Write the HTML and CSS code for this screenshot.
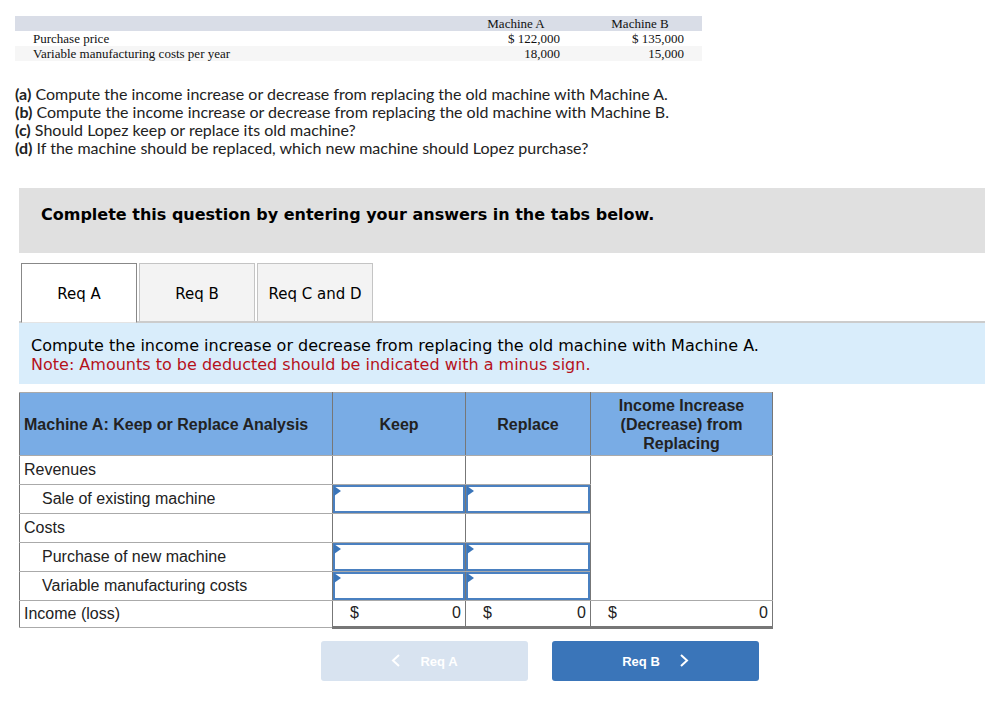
FILE: index.html
```html
<!DOCTYPE html>
<html lang="en">
<head>
<meta charset="utf-8">
<title>Keep or Replace Analysis</title>
<link rel="stylesheet" href="styles.css">
</head>
<body>
<main>
  <section class="problem">
    <table class="costs">
      <colgroup><col><col class="costs-col"><col class="costs-col"></colgroup>
      <thead>
        <tr><td></td><th scope="col">Machine A</th><th scope="col">Machine B</th></tr>
      </thead>
      <tbody>
        <tr><th scope="row">Purchase price</th><td>$ 122,000</td><td>$ 135,000</td></tr>
        <tr><th scope="row">Variable manufacturing costs per year</th><td>18,000</td><td>15,000</td></tr>
      </tbody>
    </table>
    <div class="questions">
      <p><b>(a)</b> Compute the income increase or decrease from replacing the old machine with Machine A.</p>
      <p><b>(b)</b> Compute the income increase or decrease from replacing the old machine with Machine B.</p>
      <p><b>(c)</b> Should Lopez keep or replace its old machine?</p>
      <p><b>(d)</b> If the machine should be replaced, which new machine should Lopez purchase?</p>
    </div>
  </section>

  <section class="worksheet">
    <h1 class="banner">Complete this question by entering your answers in the tabs below.</h1>
    <div class="tabs" role="tablist">
      <button class="tab tab-active" type="button" role="tab" aria-selected="true">Req A</button>
      <button class="tab" type="button" role="tab" aria-selected="false">Req B</button>
      <button class="tab" type="button" role="tab" aria-selected="false">Req C and D</button>
    </div>
    <div class="instructions">
      <p>Compute the income increase or decrease from replacing the old machine with Machine A.</p>
      <p class="note">Note: Amounts to be deducted should be indicated with a minus sign.</p>
    </div>

    <table class="analysis">
      <colgroup><col class="col-label"><col class="col-keep"><col class="col-replace"><col class="col-change"></colgroup>
      <thead>
        <tr>
          <th class="title" scope="col">Machine A: Keep or Replace Analysis</th>
          <th scope="col">Keep</th>
          <th scope="col">Replace</th>
          <th scope="col">Income Increase (Decrease) from Replacing</th>
        </tr>
      </thead>
      <tbody>
        <tr><th scope="row">Revenues</th><td></td><td></td><td class="blank" rowspan="5"></td></tr>
        <tr>
          <th class="indent" scope="row">Sale of existing machine</th>
          <td class="entry"><input type="text" aria-label="Sale of existing machine, keep"></td>
          <td class="entry"><input type="text" aria-label="Sale of existing machine, replace"></td>
        </tr>
        <tr><th scope="row">Costs</th><td></td><td></td></tr>
        <tr>
          <th class="indent" scope="row">Purchase of new machine</th>
          <td class="entry"><input type="text" aria-label="Purchase of new machine, keep"></td>
          <td class="entry"><input type="text" aria-label="Purchase of new machine, replace"></td>
        </tr>
        <tr>
          <th class="indent" scope="row">Variable manufacturing costs</th>
          <td class="entry"><input type="text" aria-label="Variable manufacturing costs, keep"></td>
          <td class="entry"><input type="text" aria-label="Variable manufacturing costs, replace"></td>
        </tr>
        <tr class="totals">
          <th scope="row">Income (loss)</th>
          <td class="total"><div class="amount"><span>$</span><span>0</span></div></td>
          <td class="total"><div class="amount"><span>$</span><span>0</span></div></td>
          <td class="total"><div class="amount"><span>$</span><span>0</span></div></td>
        </tr>
      </tbody>
    </table>

    <div class="pager">
      <button class="step" type="button" disabled>
        <svg width="10" height="14" viewBox="0 0 10 14" aria-hidden="true"><path d="M8 1 2 6.500l6 5.500"/></svg>
        <span>Req A</span>
      </button>
      <button class="step" type="button">
        <span>Req B</span>
        <svg width="10" height="14" viewBox="0 0 10 14" aria-hidden="true"><path d="m2 1 6 5.500-6 5.500"/></svg>
      </button>
    </div>
  </section>
</main>
</body>
</html>
```
FILE: styles.css
```css
* { box-sizing: border-box; }

body {
  margin: 0;
  background: #fff;
  color: #222;
  font-family: "Liberation Sans", Arial, sans-serif;
  font-size: 16px;
}

p { margin: 0; }

button, input { font: inherit; }

.problem { padding: 16px 15px 0; }

.costs {
  width: 100%;
  max-width: 687px;
  table-layout: fixed;
  border-collapse: collapse;
  font-family: "Liberation Serif", "Times New Roman", serif;
  font-size: 13px;
  line-height: 15px;
  color: #111;
}
.costs-col { width: 124px; }
.costs th, .costs td { height: 15px; padding: 0 18px; font-weight: 400; }
.costs thead { background: #d9dde7; }
.costs thead th { padding: 0; text-align: center; }
.costs tbody th { text-align: left; }
.costs tbody td { text-align: right; }
.costs tbody tr:last-child { background: #f6f6f6; }

.questions {
  margin-top: 24px;
  font-family: Lato, sans-serif;
  font-size: 16px;
  line-height: 18px;
}

.worksheet { padding: 31px 0 0 19px; }

.banner {
  margin: 0;
  padding: 16px 22px 27px;
  background: #e0e0e0;
  color: #000;
  font-family: "DejaVu Sans", Verdana, sans-serif;
  font-size: 16px;
  line-height: 22px;
}

.tabs {
  display: flex;
  gap: 2px;
  margin-top: 10px;
  padding-left: 2px;
  border-bottom: 2px solid #ccc;
}
.tab {
  width: 116px;
  height: 58px;
  padding: 2px 0 0;
  border: 1px solid #c4c4c4;
  border-bottom: 0;
  background: #f3f3f3;
  color: #000;
  font-family: "DejaVu Sans", Verdana, sans-serif;
  font-size: 15px;
  white-space: nowrap;
}
.tab-active {
  height: 60px;
  margin-bottom: -2px;
  border-color: #888;
  border-bottom: 1px solid #e4e4e4;
  background: #fff;
}

.instructions {
  padding: 13px 12px 10px;
  background: #d9edfb;
  color: #000;
  font-family: "DejaVu Sans", Verdana, sans-serif;
  font-size: 16px;
  line-height: 19px;
}
.note { color: #b5121b; }

.analysis {
  width: 100%;
  max-width: 754px;
  margin-top: 8px;
  table-layout: fixed;
  border-collapse: collapse;
  line-height: 19px;
}
.col-label { width: 313px; }
.col-keep { width: 133px; }
.col-replace { width: 125px; }
.analysis th, .analysis td {
  height: 29px;
  padding: 0 4px;
  border: 1px solid #777;
  border-top-color: #aaa;
  border-bottom-color: #aaa;
}
.analysis thead th { height: 63px; padding: 0 24px; background: #79ace5; }
.analysis thead .title { padding: 0 4px; text-align: left; }
.analysis tbody th { padding-bottom: 1px; font-weight: 400; text-align: left; }
.analysis tbody .indent { padding-left: 22px; }

.analysis .entry { position: relative; padding: 0; }
.entry::before {
  content: "";
  position: absolute;
  top: 1px;
  left: 1px;
  border-style: solid;
  border-width: 5px 0 5px 7px;
  border-color: transparent transparent transparent #3a75b9;
}
.entry input {
  display: block;
  width: 100%;
  height: 28px;
  padding: 0 6px 0 12px;
  border: 2px solid #4a80c0;
  border-radius: 0;
  outline: 0;
  background: #fff;
  text-align: right;
}

.analysis .totals th, .analysis .totals td { height: 27px; }
.analysis .total {
  padding: 0 4px 2px 17px;
  border-bottom: 3px solid #777;
}
.amount { display: flex; justify-content: space-between; }

.pager {
  display: flex;
  justify-content: flex-end;
  gap: 24px;
  max-width: 740px;
  margin-top: 12px;
}
.step {
  display: flex;
  align-items: center;
  justify-content: center;
  gap: 19px;
  width: 207px;
  height: 40px;
  padding: 0;
  border: 0;
  border-radius: 3px;
  background: #3a75b9;
  color: #fff;
  font-size: 13px;
  font-weight: 700;
}
.step:disabled { background: #d8e3f0; }
.step svg { fill: none; stroke: currentColor; stroke-width: 2; }
```
